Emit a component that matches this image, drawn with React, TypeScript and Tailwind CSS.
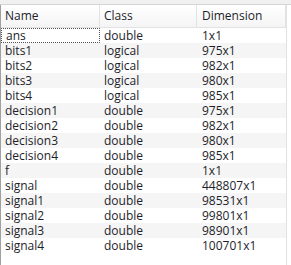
import React from 'react'

type Row = { name: string; cls: string; dim: string }

const rows: Row[] = [
  { name: 'ans', cls: 'double', dim: '1x1' },
  { name: 'bits1', cls: 'logical', dim: '975x1' },
  { name: 'bits2', cls: 'logical', dim: '982x1' },
  { name: 'bits3', cls: 'logical', dim: '980x1' },
  { name: 'bits4', cls: 'logical', dim: '985x1' },
  { name: 'decision1', cls: 'double', dim: '975x1' },
  { name: 'decision2', cls: 'double', dim: '982x1' },
  { name: 'decision3', cls: 'double', dim: '980x1' },
  { name: 'decision4', cls: 'double', dim: '985x1' },
  { name: 'f', cls: 'double', dim: '1x1' },
  { name: 'signal', cls: 'double', dim: '448807x1' },
  { name: 'signal1', cls: 'double', dim: '98531x1' },
  { name: 'signal2', cls: 'double', dim: '99801x1' },
  { name: 'signal3', cls: 'double', dim: '98901x1' },
  { name: 'signal4', cls: 'double', dim: '100701x1' },
]

export default function App() {
  return (
    <div
      className="w-[291px] h-[265px] bg-white overflow-hidden text-[12px] text-[#1e1e2a]"
      style={{ fontFamily: '"Open Sans", "Noto Sans", sans-serif' }}
    >
      <div className="h-[5px] bg-[#f0f0f0] border-b border-[#d5d5d5]" />
      <div className="flex h-[260px] border-l border-[#a0a0a0]">
        <div className="w-[285px] flex flex-col">
          {/* header */}
          <div className="flex h-[23px] bg-gradient-to-b from-white to-[#f4f4f4] border-b border-[#e2e2e2] leading-[22px]">
            <div className="w-[99px] pl-[4px] border-r border-[#e2e2e2]">Name</div>
            <div className="w-[97px] pl-[4px] border-r border-[#e2e2e2]">Class</div>
            <div className="flex-1 pl-[5px] border-r border-[#e2e2e2]">Dimension</div>
          </div>
          {rows.map((r, i) => (
            <div
              key={r.name}
              className={`flex h-[15px] leading-[15px] ${i % 2 === 0 ? 'bg-white' : 'bg-[#f5f5f5]'}`}
            >
              <div
                className={`w-[99px] pl-[4px] ${i === 0 ? 'border border-dotted border-[#555] pl-[3px] leading-[13px] bg-white' : ''}`}
              >
                {r.name}
              </div>
              <div className="w-[97px] pl-[4px]">{r.cls}</div>
              <div className="flex-1 pl-[5px]">{r.dim}</div>
            </div>
          ))}
        </div>
        <div className="flex-1 border-l border-[#e2e2e2]" />
      </div>
    </div>
  )
}
